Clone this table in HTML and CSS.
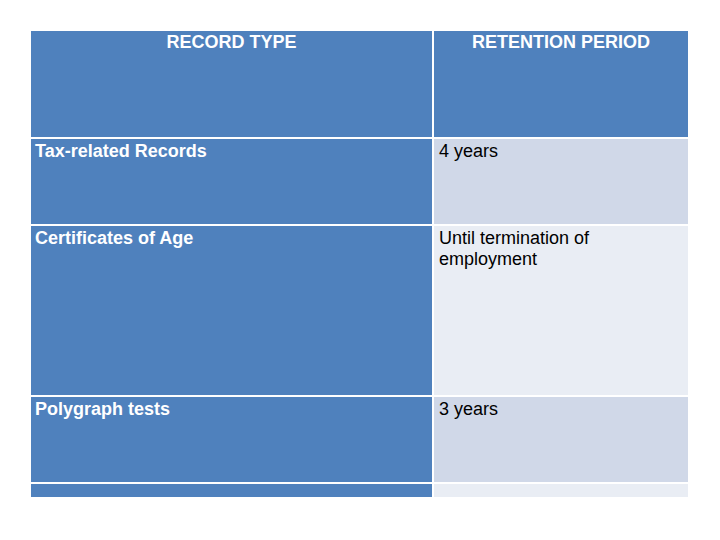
FILE: index.html
```html
<!DOCTYPE html>
<html>
<head>
<meta charset="utf-8">
<link rel="stylesheet" href="styles.css">
</head>
<body>
<div class="page">
  <div class="table">
    <div class="cell head">RECORD TYPE</div>
    <div class="cell head">RETENTION PERIOD</div>
    <div class="cell key r1">Tax-related Records</div>
    <div class="cell val dark r1">4 years</div>
    <div class="cell key r2">Certificates of Age</div>
    <div class="cell val light r2">Until termination of<br>employment</div>
    <div class="cell key r3">Polygraph tests</div>
    <div class="cell val dark r3">3 years</div>
    <div class="cell key r4"></div>
    <div class="cell val light r4"></div>
  </div>
</div>
</body>
</html>
```
FILE: styles.css
```css
html, body {
  margin: 0;
  padding: 0;
  background: #ffffff;
}
.page {
  padding: 31px 0 0 31px;
}
.table {
  display: grid;
  grid-template-columns: 401px 254px;
  grid-template-rows: 106px 85px 169px 85px 13px;
  gap: 2px;
  font-family: "Liberation Sans", Arial, sans-serif;
  font-size: 18px;
  line-height: 21px;
}
.cell {
  padding: 2px 4px 0 5px;
  overflow: hidden;
}
.head {
  background: #4f81bd;
  color: #ffffff;
  font-weight: bold;
  text-align: center;
  padding-top: 1px;
  padding-left: 4px;
}
.key {
  background: #4f81bd;
  color: #ffffff;
  font-weight: bold;
  padding-left: 4px;
}
.val {
  color: #000000;
}
.dark {
  background: #d0d8e8;
}
.light {
  background: #e9edf4;
}
.r4 {
  padding: 0;
}
```
